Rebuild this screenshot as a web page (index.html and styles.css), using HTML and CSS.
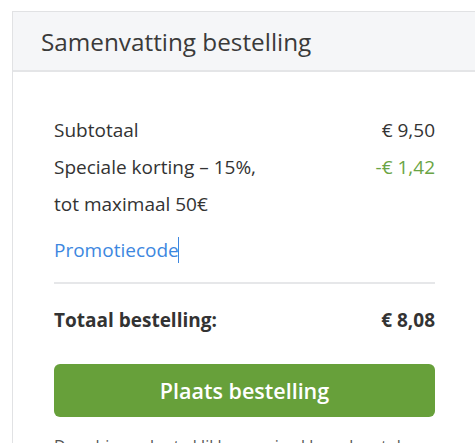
FILE: index.html
```html
<!DOCTYPE html>
<html lang="nl">
<head>
<meta charset="utf-8">
<link rel="stylesheet" href="styles.css">
</head>
<body>
<div class="card">
  <div class="card-header">Samenvatting bestelling</div>
  <div class="card-body">
    <div class="row"><span>Subtotaal</span><span>€ 9,50</span></div>
    <div class="row"><span>Speciale korting – 15%,<br>tot maximaal 50€</span><span class="discount">-€ 1,42</span></div>
    <div class="promo"><span class="promo-link">Promotiecode</span><span class="caret"></span></div>
    <div class="divider"></div>
    <div class="row total"><span>Totaal bestelling:</span><span>€ 8,08</span></div>
    <button class="btn">Plaats bestelling</button>
    <p class="note">Door hieronder te klikken, ga je akkoord met de voorwaarden.</p>
  </div>
</div>
</body>
</html>
```
FILE: styles.css
```css
html, body {
  margin: 0;
  padding: 0;
  background: #fff;
  overflow: hidden;
}
body {
  font-family: "Open Sans", "Liberation Sans", sans-serif;
  color: #333;
  padding: 11px 0 0 12px;
  width: 475px;
  height: 443px;
  box-sizing: border-box;
}
.card {
  width: 465px;
  border: 1px solid #e1e2e4;
  box-sizing: border-box;
  background: #fff;
}
.card-header {
  background: #f5f6f8;
  border-bottom: 2px solid #e4e5e7;
  height: 60px;
  box-sizing: border-box;
  padding-left: 28px;
  font-size: 24.3px;
  line-height: 60px;
  color: #3a3a3a;
}
.card-body {
  padding: 40px 41px 0 41px;
}
.row {
  display: flex;
  justify-content: space-between;
  font-size: 19px;
  line-height: 37px;
}
.discount {
  color: #6aa444;
}
.promo {
  display: flex;
  align-items: center;
  margin-top: 8px;
  height: 37px;
  font-size: 19px;
}
.promo-link {
  color: #3d87e0;
}
.caret {
  display: inline-block;
  width: 1px;
  height: 26px;
  background: #3d87e0;
  margin-left: -1px;
}
.divider {
  height: 2px;
  background: #e6e7e9;
  margin-top: 14px;
}
.total {
  font-weight: 700;
  margin-top: 18px;
}
.btn {
  display: block;
  width: 100%;
  height: 53px;
  margin-top: 25px;
  border: none;
  border-radius: 6px;
  background: #67a03a;
  color: #fff;
  font-family: "Open Sans", "Liberation Sans", sans-serif;
  font-size: 21.5px;
  font-weight: 600;
  padding: 0;
}
.note {
  margin: 18px 0 0;
  font-size: 16px;
  line-height: 22px;
  color: #555;
}
```
